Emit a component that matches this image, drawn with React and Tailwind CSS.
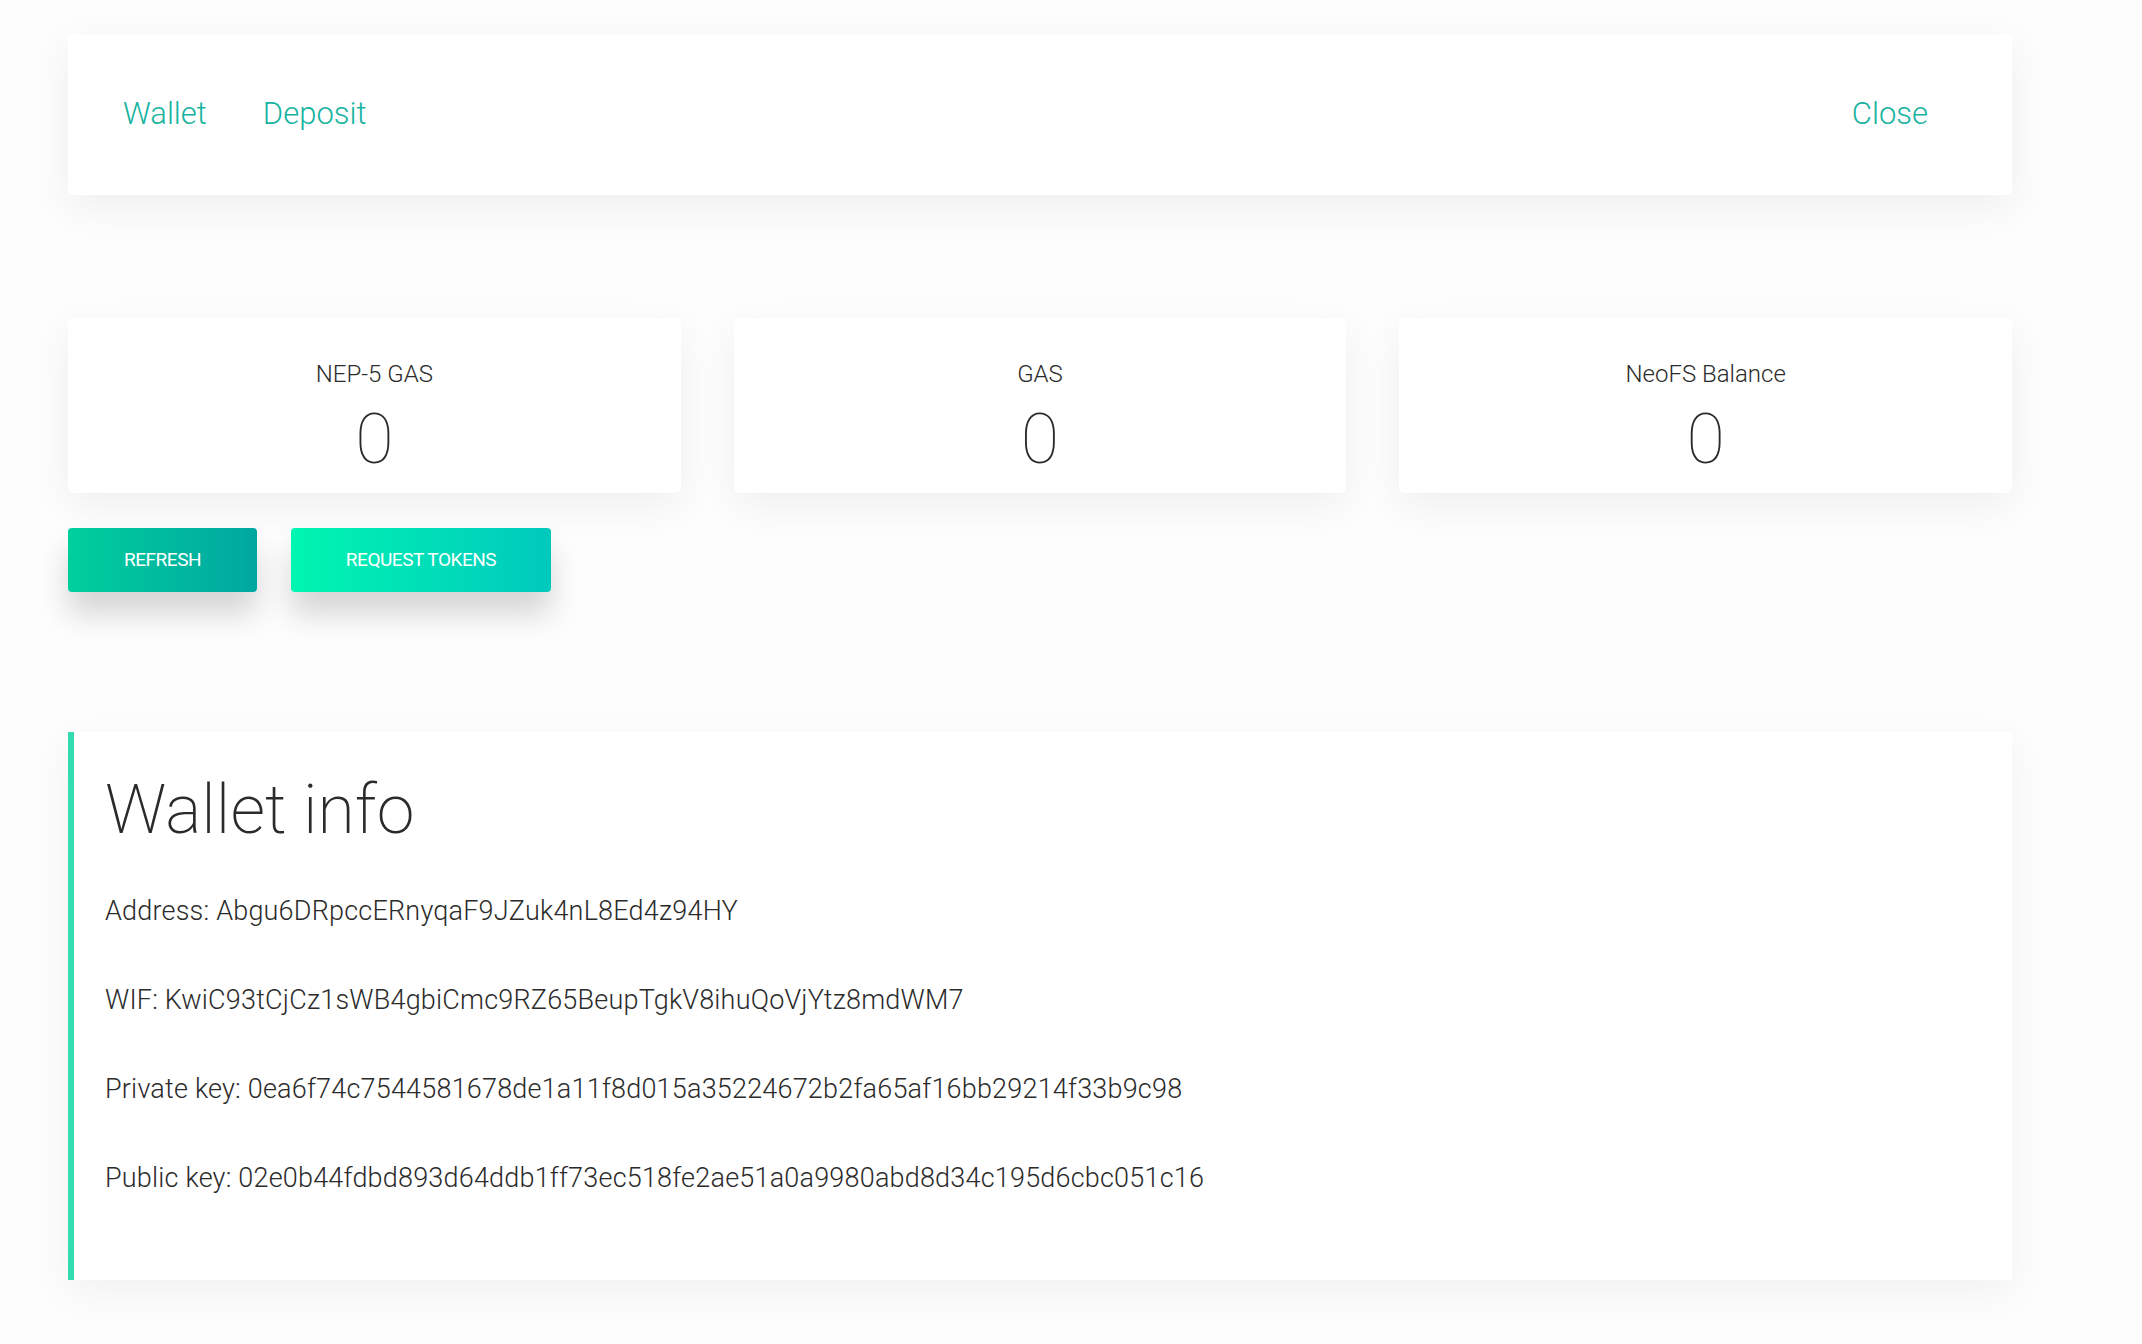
import React from 'react'

const stats = [
  { label: 'NEP-5 GAS', value: '0' },
  { label: 'GAS', value: '0' },
  { label: 'NeoFS Balance', value: '0' },
]

const walletInfo = [
  ['Address', 'Abgu6DRpccERnyqaF9JZuk4nL8Ed4z94HY'],
  ['WIF', 'KwiC93tCjCz1sWB4gbiCmc9RZ65BeupTgkV8ihuQoVjYtz8mdWM7'],
  ['Private key', '0ea6f74c7544581678de1a11f8d015a35224672b2fa65af16bb29214f33b9c98'],
  ['Public key', '02e0b44fdbd893d64ddb1ff73ec518fe2ae51a0a9980abd8d34c195d6cbc051c16'],
]

const App = () => {
  return (
    <div className="min-h-[1344px] bg-[#fdfdfd] pt-[34px] pb-[64px] font-['Roboto',sans-serif] text-[#2b2b2b]">
      <div className="ml-[68px] w-[1944px]">
        {/* top nav */}
        <div className="flex h-[161px] items-center bg-white pl-[55px] pr-[84px] text-[31px] font-light text-[#17b3a1] shadow-[0_12px_40px_rgba(0,0,0,0.06)]">
          <a className="cursor-pointer">Wallet</a>
          <a className="ml-[56px] cursor-pointer">Deposit</a>
          <a className="ml-auto cursor-pointer">Close</a>
        </div>

        {/* balances */}
        <div className="mt-[123px] grid grid-cols-3 gap-[53px]">
          {stats.map((s) => (
            <div key={s.label} className="flex h-[175px] flex-col items-center rounded-md bg-white pt-[38px] shadow-[0_12px_40px_rgba(0,0,0,0.06)]">
              <span className="text-[24px] leading-[36px] font-light">{s.label}</span>
              <span className="mt-[12px] text-[70px] leading-[70px] font-thin">{s.value}</span>
            </div>
          ))}
        </div>

        <div className="mt-[35px] flex gap-[34px]">
          <button className="h-[64px] w-[189px] rounded-[4px] bg-gradient-to-r from-[#00cf9c] to-[#00a7a0] text-[19px] font-normal tracking-tight text-white uppercase shadow-[0_22px_30px_rgba(0,0,0,0.16)]">
            Refresh
          </button>
          <button className="h-[64px] w-[260px] rounded-[4px] bg-gradient-to-r from-[#00f6b0] to-[#00c9bd] text-[19px] font-normal tracking-tight text-white uppercase shadow-[0_22px_30px_rgba(0,0,0,0.16)]">
            Request tokens
          </button>
        </div>

        {/* wallet info */}
        <div className="mt-[140px] h-[548px] rounded-r-[4px] border-l-[6px] border-[#33ddb0] bg-white pt-[37px] pl-[31px] shadow-[0_12px_40px_rgba(0,0,0,0.05)]">
          <h1 className="text-[68px] leading-[82px] font-extralight">Wallet info</h1>
          <div className="mt-[40px] flex flex-col gap-[48px]">
            {walletInfo.map(([k, v]) => (
              <p key={k} className="text-[27px] leading-[41px] font-light tracking-[0.2px]">
                {k}: {v}
              </p>
            ))}
          </div>
        </div>
      </div>
    </div>
  )
}

export default App
